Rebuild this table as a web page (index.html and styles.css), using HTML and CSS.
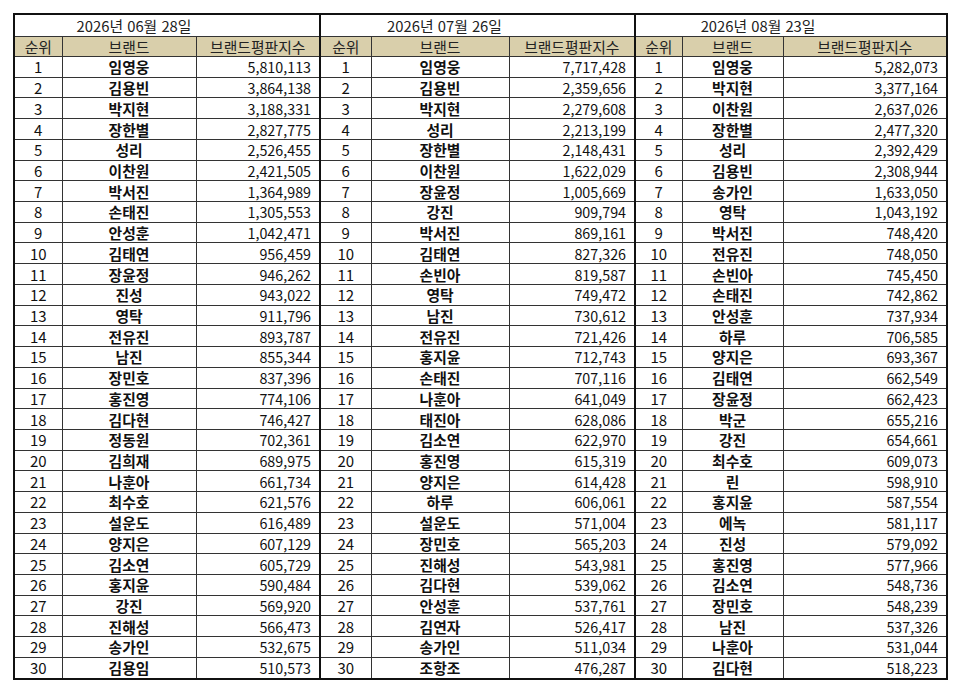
FILE: index.html
```html
<!DOCTYPE html>
<html lang="ko">
<head>
<meta charset="utf-8">
<link rel="stylesheet" href="styles.css">
</head>
<body>
<table class="rank">
<colgroup>
<col class="c-r1"><col class="c-b1"><col class="c-s1">
<col class="c-r2"><col class="c-b2"><col class="c-s2">
<col class="c-r3"><col class="c-b3"><col class="c-s3">
</colgroup>
<tbody id="tb">
<tr class="date-row">
<td colspan="3" class="date blk">2026년 06월 28일</td>
<td colspan="3" class="date blk">2026년 07월 26일</td>
<td colspan="3" class="date">2026년 08월 23일</td>
</tr>
<tr class="head-row">
<th>순위</th><th>브랜드</th><th class="blk">브랜드평판지수</th>
<th>순위</th><th>브랜드</th><th class="blk">브랜드평판지수</th>
<th>순위</th><th>브랜드</th><th>브랜드평판지수</th>
</tr>
</tbody>
</table>
<script src="app.js"></script>
</body>
</html>
```

FILE: app.js
```js
var a = [
["임영웅","5,810,113"],["김용빈","3,864,138"],["박지현","3,188,331"],["장한별","2,827,775"],["성리","2,526,455"],
["이찬원","2,421,505"],["박서진","1,364,989"],["손태진","1,305,553"],["안성훈","1,042,471"],["김태연","956,459"],
["장윤정","946,262"],["진성","943,022"],["영탁","911,796"],["전유진","893,787"],["남진","855,344"],
["장민호","837,396"],["홍진영","774,106"],["김다현","746,427"],["정동원","702,361"],["김희재","689,975"],
["나훈아","661,734"],["최수호","621,576"],["설운도","616,489"],["양지은","607,129"],["김소연","605,729"],
["홍지윤","590,484"],["강진","569,920"],["진해성","566,473"],["송가인","532,675"],["김용임","510,573"]];
var b = [
["임영웅","7,717,428"],["김용빈","2,359,656"],["박지현","2,279,608"],["성리","2,213,199"],["장한별","2,148,431"],
["이찬원","1,622,029"],["장윤정","1,005,669"],["강진","909,794"],["박서진","869,161"],["김태연","827,326"],
["손빈아","819,587"],["영탁","749,472"],["남진","730,612"],["전유진","721,426"],["홍지윤","712,743"],
["손태진","707,116"],["나훈아","641,049"],["태진아","628,086"],["김소연","622,970"],["홍진영","615,319"],
["양지은","614,428"],["하루","606,061"],["설운도","571,004"],["장민호","565,203"],["진해성","543,981"],
["김다현","539,062"],["안성훈","537,761"],["김연자","526,417"],["송가인","511,034"],["조항조","476,287"]];
var c = [
["임영웅","5,282,073"],["박지현","3,377,164"],["이찬원","2,637,026"],["장한별","2,477,320"],["성리","2,392,429"],
["김용빈","2,308,944"],["송가인","1,633,050"],["영탁","1,043,192"],["박서진","748,420"],["전유진","748,050"],
["손빈아","745,450"],["손태진","742,862"],["안성훈","737,934"],["하루","706,585"],["양지은","693,367"],
["김태연","662,549"],["장윤정","662,423"],["박군","655,216"],["강진","654,661"],["최수호","609,073"],
["린","598,910"],["홍지윤","587,554"],["에녹","581,117"],["진성","579,092"],["홍진영","577,966"],
["김소연","548,736"],["장민호","548,239"],["남진","537,326"],["나훈아","531,044"],["김다현","518,223"]];
var tb = document.getElementById("tb");
for (var i = 0; i < 30; i++) {
  var tr = document.createElement("tr");
  var sets = [a, b, c];
  var html = "";
  for (var k = 0; k < 3; k++) {
    var last = k < 2 ? " blk" : "";
    html += '<td class="num">' + (i + 1) + '</td>' +
            '<td class="name">' + sets[k][i][0] + '</td>' +
            '<td class="score' + last + '">' + sets[k][i][1] + '</td>';
  }
  tr.innerHTML = html;
  tb.appendChild(tr);
}
```

FILE: styles.css
```css
html, body {
  margin: 0;
  padding: 0;
  background: #ffffff;
}
body {
  padding: 13px 0 0 13px;
  font-family: "Noto Sans CJK KR", "Noto Sans", sans-serif;
  color: #111;
}
.rank {
  border-collapse: collapse;
  border: 2px solid #111;
  table-layout: fixed;
  width: 933px;
}
.c-r1 { width: 48px; }
.c-b1 { width: 134px; }
.c-s1 { width: 124px; }
.c-r2 { width: 51px; }
.c-b2 { width: 138px; }
.c-s2 { width: 126px; }
.c-r3 { width: 47px; }
.c-b3 { width: 101px; }
.c-s3 { width: 164px; }
.rank td, .rank th {
  border: 1px solid #333;
  padding: 0;
  font-size: 14.8px;
  line-height: 19px;
  white-space: nowrap;
  overflow: hidden;
}
.rank .blk {
  border-right: 2px solid #111;
}
.date-row td {
  height: 21px;
  text-align: center;
  padding-right: 66px;
  font-weight: 400;
  color: #222;
}
.head-row th {
  height: 19px;
  background: #d9cfab;
  font-weight: 400;
  text-align: center;
  color: #222;
}
.rank td.num {
  text-align: center;
  height: 19.72px;
  font-size: 15px;
}
.rank td.name {
  text-align: center;
  font-weight: 700;
}
.rank td.score {
  text-align: right;
  padding-right: 8px;
  font-size: 14.3px;
}
```
